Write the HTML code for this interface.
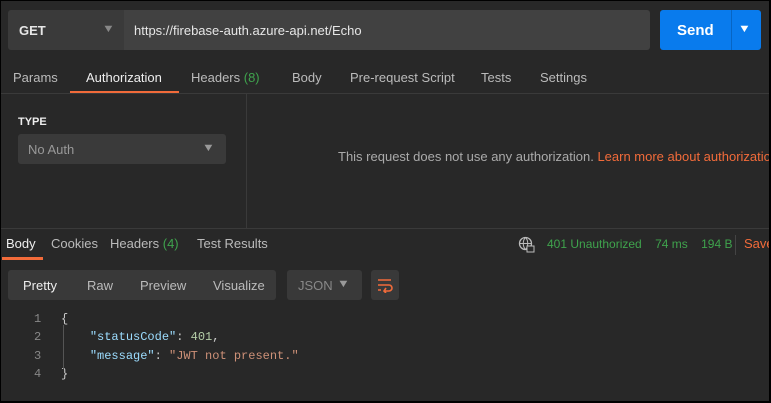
<!DOCTYPE html><html><head><style>
*{margin:0;padding:0;box-sizing:border-box}
body{width:771px;height:403px;background:#000;overflow:hidden;font-family:"Liberation Sans",sans-serif;font-size:13px;color:#cfcfcf}
#f{position:absolute;left:1px;top:1px;width:768px;height:400px;background:#282828;overflow:hidden}
.a{position:absolute;white-space:nowrap}
.g{color:#3fa34d}
.ar{font-size:11px;transform:scaleX(1.2)}
</style></head><body><div id="f">
<div class="a" style="left:7px;top:9px;width:116px;height:40px;background:#3a3a3a;border-radius:3px 0 0 3px"></div>
<div class="a" style="left:18px;top:22px;color:#e6e6e6;font-weight:bold">GET</div>
<div class="a ar" style="left:102px;top:22px;color:#888">▼</div>
<div class="a" style="left:123px;top:9px;width:526px;height:40px;background:#414141;border-radius:0 3px 3px 0"></div>
<div class="a" style="left:133px;top:22px;color:#e6e6e6">https://firebase-auth.azure-api.net/Echo</div>
<div class="a" style="left:659px;top:9px;width:101px;height:40px;background:#097bed;border-radius:3px"></div>
<div class="a" style="left:730px;top:9px;width:1px;height:40px;background:#0665c4"></div>
<div class="a" style="left:676px;top:21px;color:#fff;font-weight:bold;font-size:15px">Send</div>
<div class="a ar" style="left:738px;top:22px;color:#fff">▼</div>
<div class="a" style="left:12px;top:69px;color:#bbb">Params</div>
<div class="a" style="left:85px;top:69px;color:#eee">Authorization</div>
<div class="a" style="left:69px;top:90px;width:109px;height:3px;background:#f26b3a"></div>
<div class="a" style="left:190px;top:69px;color:#bbb">Headers <span class="g">(8)</span></div>
<div class="a" style="left:291px;top:69px;color:#bbb">Body</div>
<div class="a" style="left:349px;top:69px;color:#bbb">Pre-request Script</div>
<div class="a" style="left:480px;top:69px;color:#bbb">Tests</div>
<div class="a" style="left:539px;top:69px;color:#bbb">Settings</div>
<div class="a" style="left:0;top:92px;width:768px;height:1px;background:#3a3a3a"></div>
<div class="a" style="left:245px;top:93px;width:1px;height:134px;background:#3a3a3a"></div>
<div class="a" style="left:0;top:227px;width:768px;height:1px;background:#3a3a3a"></div>
<div class="a" style="left:17px;top:115px;color:#eee;font-weight:bold;font-size:11px">TYPE</div>
<div class="a" style="left:17px;top:133px;width:208px;height:30px;background:#3a3a3a;border-radius:3px"></div>
<div class="a" style="left:27px;top:141px;color:#999">No Auth</div>
<div class="a ar" style="left:202px;top:141px;color:#999">▼</div>
<div class="a" style="left:337px;top:148px;color:#aaa">This request does not use any authorization. <span style="color:#f26b3a">Learn more about authorization</span></div>
<div class="a" style="left:5px;top:235px;color:#eee">Body</div>
<div class="a" style="left:1px;top:256px;width:41px;height:3px;background:#f26b3a"></div>
<div class="a" style="left:50px;top:235px;color:#bbb">Cookies</div>
<div class="a" style="left:109px;top:235px;color:#bbb">Headers <span class="g">(4)</span></div>
<div class="a" style="left:196px;top:235px;color:#bbb">Test Results</div>
<svg class="a" style="left:517px;top:235px" width="17" height="17"><circle cx="7.5" cy="7.5" r="6" stroke="#bbb" stroke-width="1.3" fill="none"/><path d="M1.5 7.5h12M7.5 1.5c-3 3-3 9 0 12M7.5 1.5c3 3 3 9 0 12" stroke="#bbb" stroke-width="1" fill="none"/><rect x="9" y="10" width="7" height="6" fill="#282828" stroke="#bbb"/></svg>
<div class="a" style="left:546px;top:236px;font-size:12px"><span class="g">401 Unauthorized</span>&nbsp;&nbsp;&nbsp;&nbsp;<span class="g">74 ms</span>&nbsp;&nbsp;&nbsp;&nbsp;<span class="g">194 B</span></div>
<div class="a" style="left:734px;top:234px;width:1px;height:20px;background:#444"></div>
<div class="a" style="left:743px;top:235px;color:#f26b3a">Save</div>
<div class="a" style="left:7px;top:269px;width:268px;height:30px;background:#393939;border-radius:3px"></div>
<div class="a" style="left:22px;top:277px;color:#eee">Pretty</div>
<div class="a" style="left:86px;top:277px;color:#bbb">Raw</div>
<div class="a" style="left:139px;top:277px;color:#bbb">Preview</div>
<div class="a" style="left:212px;top:277px;color:#bbb">Visualize</div>
<div class="a" style="left:286px;top:269px;width:75px;height:30px;background:#393939;border-radius:3px"></div>
<div class="a" style="left:297px;top:277px;color:#888">JSON</div>
<div class="a ar" style="left:337px;top:277px;color:#999">▼</div>
<div class="a" style="left:370px;top:269px;width:28px;height:30px;background:#393939;border-radius:3px"></div>
<svg class="a" style="left:376px;top:276px" width="16" height="16"><path d="M1 3h13M1 8h11a3 3 0 0 1 0 6H7M1 13h3M9 11l-2 3 2 2" stroke="#f26b3a" stroke-width="1.6" fill="none"/></svg>
<div style="position:absolute;left:0;top:309px;font-family:'Liberation Mono',monospace;font-size:12px;line-height:18.3px">
<div class="a" style="left:33px;top:0;color:#888;text-align:right">1<br>2<br>3<br>4</div>
<div class="a" style="left:60px;top:0;color:#ccc">{<br>&nbsp;&nbsp;&nbsp;&nbsp;<span style="color:#9cdcfe">"statusCode"</span>: <span style="color:#b5cea8">401</span>,<br>&nbsp;&nbsp;&nbsp;&nbsp;<span style="color:#9cdcfe">"message"</span>: <span style="color:#ce9178">"JWT not present."</span><br>}</div>
<div class="a" style="left:62px;top:15px;width:1px;height:44px;background:#555"></div>
</div>
</div></body></html>
